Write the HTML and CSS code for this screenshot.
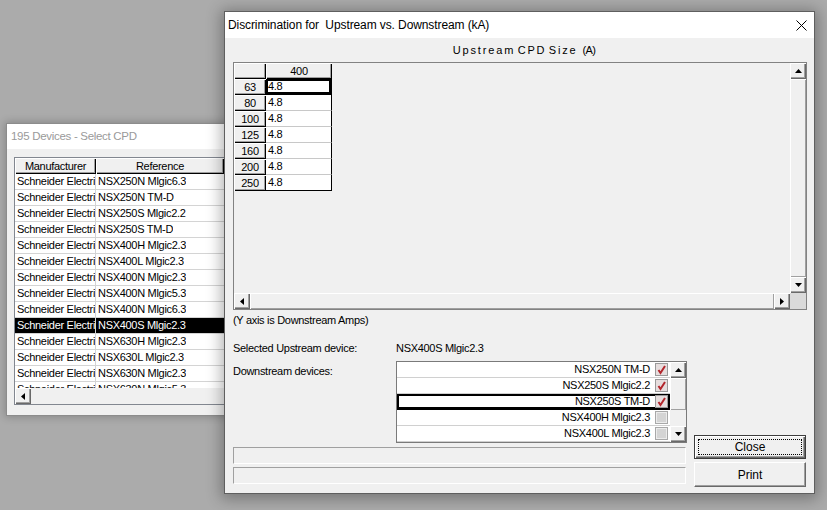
FILE: index.html
```html
<!DOCTYPE html>
<html>
<head>
<meta charset="utf-8">
<link rel="stylesheet" href="styles.css">
</head>
<body>
<div class="desktop">

  <div class="win devices">
    <div class="titlebar inactive">195 Devices - Select CPD</div>
    <div class="dev-body">
      <div class="listview">
        <div class="lv-head">
          <div class="lh col-m">Manufacturer</div>
          <div class="lh col-r">Reference</div>
        </div>
        <div class="lv-rows">
          <div class="lv-row"><div class="c-m">Schneider Electric</div><div class="c-r">NSX250N Mlgic6.3</div></div>
          <div class="lv-row"><div class="c-m">Schneider Electric</div><div class="c-r">NSX250N TM-D</div></div>
          <div class="lv-row"><div class="c-m">Schneider Electric</div><div class="c-r">NSX250S Mlgic2.2</div></div>
          <div class="lv-row"><div class="c-m">Schneider Electric</div><div class="c-r">NSX250S TM-D</div></div>
          <div class="lv-row"><div class="c-m">Schneider Electric</div><div class="c-r">NSX400H Mlgic2.3</div></div>
          <div class="lv-row"><div class="c-m">Schneider Electric</div><div class="c-r">NSX400L Mlgic2.3</div></div>
          <div class="lv-row"><div class="c-m">Schneider Electric</div><div class="c-r">NSX400N Mlgic2.3</div></div>
          <div class="lv-row"><div class="c-m">Schneider Electric</div><div class="c-r">NSX400N Mlgic5.3</div></div>
          <div class="lv-row"><div class="c-m">Schneider Electric</div><div class="c-r">NSX400N Mlgic6.3</div></div>
          <div class="lv-row selected"><div class="c-m">Schneider Electric</div><div class="c-r">NSX400S Mlgic2.3</div></div>
          <div class="lv-row"><div class="c-m">Schneider Electric</div><div class="c-r">NSX630H Mlgic2.3</div></div>
          <div class="lv-row"><div class="c-m">Schneider Electric</div><div class="c-r">NSX630L Mlgic2.3</div></div>
          <div class="lv-row"><div class="c-m">Schneider Electric</div><div class="c-r">NSX630N Mlgic2.3</div></div>
          <div class="lv-row"><div class="c-m">Schneider Electric</div><div class="c-r">NSX630N Mlgic5.3</div></div>
        </div>
        <div class="hscroll">
          <div class="sb-btn w16"><svg width="4" height="7" viewBox="0 0 4 7"><path d="M4 0V7L0 3.5Z"/></svg></div>
          <div class="sb-track"></div>
        </div>
      </div>
    </div>
  </div>

  <div class="win dialog">
    <div class="titlebar">
      <span>Discrimination for&nbsp; Upstream vs. Downstream (kA)</span>
      <svg class="xbtn" width="11" height="11" viewBox="0 0 11 11"><path d="M0.5 0.5L10.5 10.5M10.5 0.5L0.5 10.5" stroke="#000" stroke-width="1" fill="none"/></svg>
    </div>
    <div class="dbody">
      <div class="heading">U p s t r e a m&nbsp; C P D&nbsp; S i z e&nbsp;&nbsp; (A)</div>

      <div class="gridbox">
        <div class="gb-content">
          <div class="tbl">
            <div class="hc"></div><div class="hc">400</div>
            <div class="hc">63</div><div class="dc focus">4.8</div>
            <div class="hc">80</div><div class="dc">4.8</div>
            <div class="hc">100</div><div class="dc">4.8</div>
            <div class="hc">125</div><div class="dc">4.8</div>
            <div class="hc">160</div><div class="dc">4.8</div>
            <div class="hc">200</div><div class="dc">4.8</div>
            <div class="hc">250</div><div class="dc last">4.8</div>
          </div>
        </div>
        <div class="vscroll">
          <div class="sb-btn h16"><svg width="7" height="4" viewBox="0 0 7 4"><path d="M0 4H7L3.5 0Z"/></svg></div>
          <div class="sb-thumb grow"></div>
          <div class="sb-btn h16"><svg width="7" height="4" viewBox="0 0 7 4"><path d="M0 0H7L3.5 4Z"/></svg></div>
        </div>
        <div class="hscroll2">
          <div class="sb-btn w16"><svg width="4" height="7" viewBox="0 0 4 7"><path d="M4 0V7L0 3.5Z"/></svg></div>
          <div class="sb-thumb grow"></div>
          <div class="sb-btn w16"><svg width="4" height="7" viewBox="0 0 4 7"><path d="M0 0V7L4 3.5Z"/></svg></div>
        </div>
        <div class="sb-corner"></div>
      </div>

      <div class="caption">(Y axis is Downstream Amps)</div>

      <div class="lower">
        <div class="lower-left">
          <div class="sel-row">
            <div class="lbl">Selected Upstream device:</div>
            <div>NSX400S Mlgic2.3</div>
          </div>
          <div class="down-row">
            <div class="lbl lbl-down">Downstream devices:</div>
            <div class="listbox">
              <div class="lb-items">
                <div class="lb-row"><span>NSX250N TM-D</span><svg class="cb" width="13" height="13" viewBox="0 0 13 13"><rect x="0.5" y="0.5" width="12" height="12" fill="#e6dede" stroke="#9a9a9a"/><path d="M3.5 7L5.5 10L10 3" stroke="#b3262c" stroke-width="2" fill="none"/></svg></div>
                <div class="lb-row"><span>NSX250S Mlgic2.2</span><svg class="cb" width="13" height="13" viewBox="0 0 13 13"><rect x="0.5" y="0.5" width="12" height="12" fill="#e6dede" stroke="#9a9a9a"/><path d="M3.5 7L5.5 10L10 3" stroke="#b3262c" stroke-width="2" fill="none"/></svg></div>
                <div class="lb-row focus"><span>NSX250S TM-D</span><svg class="cb" width="13" height="13" viewBox="0 0 13 13"><rect x="0.5" y="0.5" width="12" height="12" fill="#e6dede" stroke="#9a9a9a"/><path d="M3.5 7L5.5 10L10 3" stroke="#b3262c" stroke-width="2" fill="none"/></svg></div>
                <div class="lb-row"><span>NSX400H Mlgic2.3</span><svg class="cb" width="13" height="13" viewBox="0 0 13 13"><rect x="0.5" y="0.5" width="12" height="12" fill="#d4d4d4" stroke="#a8a8a8"/><rect x="1.5" y="1.5" width="10" height="10" fill="none" stroke="#ececec"/></svg></div>
                <div class="lb-row"><span>NSX400L Mlgic2.3</span><svg class="cb" width="13" height="13" viewBox="0 0 13 13"><rect x="0.5" y="0.5" width="12" height="12" fill="#d4d4d4" stroke="#a8a8a8"/><rect x="1.5" y="1.5" width="10" height="10" fill="none" stroke="#ececec"/></svg></div>
              </div>
              <div class="lb-scroll">
                <div class="sb-btn h16"><svg width="7" height="4" viewBox="0 0 7 4"><path d="M0 4H7L3.5 0Z"/></svg></div>
                <div class="sb-thumb lb-thumb"></div>
                <div class="sb-track grow"></div>
                <div class="sb-btn h16"><svg width="7" height="4" viewBox="0 0 7 4"><path d="M0 0H7L3.5 4Z"/></svg></div>
              </div>
            </div>
          </div>
          <div class="progress first"></div>
          <div class="progress"></div>
        </div>
        <div class="lower-right">
          <div class="btn default"><span class="focus-rect">Close</span></div>
          <div class="btn print">Print</div>
        </div>
      </div>
    </div>
  </div>

</div>
</body>
</html>
```

FILE: styles.css
```css
* { box-sizing: border-box; }
html, body { margin: 0; padding: 0; }
body {
  width: 827px;
  height: 510px;
  overflow: hidden;
  background: #ababab;
  font-family: "Liberation Sans", Arial, sans-serif;
  font-size: 11px;
  letter-spacing: -0.3px;
  color: #000;
}
.desktop { position: relative; width: 827px; height: 510px; }

.win {
  position: absolute;
  background: #f0f0f0;
  display: flex;
  flex-direction: column;
}
.titlebar {
  flex: none;
  background: #fff;
  font-size: 12px;
  letter-spacing: -0.1px;
  white-space: nowrap;
  padding-left: 3px;
}
.inactive { color: #9a9a9a; }

/* left window */
.devices {
  left: 6px;
  top: 123px;
  width: 240px;
  height: 293px;
  border: 1px solid #8c8c8c;
  box-shadow: 0 0 8px 1px rgba(0,0,0,0.22);
}
.devices .titlebar { height: 25px; line-height: 25px; font-size: 11.5px; letter-spacing: -0.3px; padding-left: 4px; }
.dev-body { padding: 8px 0 0 7px; }
.listview {
  width: 226px;
  height: 248px;
  border: 1px solid #828790;
  background: #fff;
  display: flex;
  flex-direction: column;
  overflow: hidden;
}
.lv-head { display: flex; height: 16px; flex: none; }
.lh {
  background: #f0f0f0;
  text-align: center;
  line-height: 16px;
  box-shadow: inset 1px 1px #fff, inset -1px -1px #000, inset -2px -2px #a0a0a0;
  white-space: nowrap;
  overflow: hidden;
}
.col-m { width: 81px; flex: none; }
.col-r { width: 128px; flex: none; }
.lv-rows { height: 214px; overflow: hidden; flex: none; }
.lv-row {
  display: flex;
  height: 16px;
  border-bottom: 1px solid #d4d4d4;
  line-height: 15px;
  white-space: nowrap;
}
.c-m { width: 81px; flex: none; overflow: hidden; text-overflow: clip; padding-left: 2px; border-right: 1px solid #d4d4d4; }
.c-r { padding-left: 2px; overflow: hidden; }
.lv-row.selected { background: #000; color: #fff; }
.hscroll { display: flex; height: 16px; flex: none; background: #f0f0f0; }

/* scrollbar parts */
.sb-btn {
  background: #f0f0f0;
  box-shadow: inset 1px 1px #fff, inset -1px -1px #696969, inset -2px -2px #a0a0a0;
  display: flex;
  align-items: center;
  justify-content: center;
  flex: none;
}
.sb-btn svg { display: block; fill: #000; }
.w16 { width: 16px; }
.h16 { height: 16px; }
.sb-track { flex: 1; background: #f0f0f0; }
.sb-thumb {
  background: #f0f0f0;
  box-shadow: inset 1px 1px #fff, inset -1px -1px #a0a0a0;
}
.grow { flex: 1; }

/* dialog */
.dialog {
  left: 224px;
  top: 11px;
  width: 591px;
  height: 483px;
  border: 1px solid #5f5f5f;
  box-shadow: 0 2px 14px 3px rgba(0,0,0,0.3);
}
.dialog .titlebar {
  height: 26px;
  line-height: 25px;
  display: flex;
  align-items: center;
  justify-content: space-between;
  padding-right: 7px;
}
.xbtn { display: block; }
.dbody {
  flex: 1;
  padding: 0 7px 6px 8px;
  display: flex;
  flex-direction: column;
}
.heading {
  padding-top: 4px;
  margin-bottom: 4px;
  line-height: 16px;
  text-align: center;
  white-space: pre;
  letter-spacing: -0.6px;
  padding-left: 8px;
}
.gridbox {
  height: 248px;
  border: 1px solid #828282;
  display: grid;
  grid-template-columns: 1fr 16px;
  grid-template-rows: 1fr 16px;
  flex: none;
}
.gb-content { background: #f0f0f0; overflow: hidden; }
.tbl {
  display: grid;
  grid-template-columns: 32px 66px;
  grid-auto-rows: 16px;
  width: 98px;
}
.hc {
  background: #f0f0f0;
  text-align: center;
  line-height: 16px;
  box-shadow: inset 1px 1px #fff, inset -1px -1px #000, inset -2px -2px #a0a0a0;
}
.dc {
  background: #fff;
  border-bottom: 1px solid #c8c8c8;
  border-right: 1px solid #000;
  padding-left: 2px;
  line-height: 15px;
}
.dc.last { border-bottom-color: #000; }
.dc.focus { box-shadow: inset 0 0 0 2px #000; border-bottom-color: #000; }
.vscroll { display: flex; flex-direction: column; }
.hscroll2 { display: flex; }
.sb-corner { background: #dadada; }

.caption { margin-top: 3px; line-height: 14px; height: 14px; }

.lower {
  margin-top: 14px;
  display: flex;
  align-items: flex-end;
  gap: 7px;
}
.lower-left { width: 454px; margin-bottom: 3px; }
.sel-row { display: flex; line-height: 14px; height: 14px; }
.lbl { width: 163px; flex: none; }
.down-row { display: flex; margin-top: 6px; }
.lbl-down { padding-top: 3px; line-height: 14px; }
.listbox {
  width: 291px;
  height: 82px;
  border: 1px solid #7a7a7a;
  display: flex;
  background: #fff;
}
.lb-items { flex: 1; }
.lb-row {
  display: flex;
  justify-content: flex-end;
  align-items: center;
  height: 16px;
  border-bottom: 1px solid #d0d0d0;
  padding-right: 2px;
  white-space: nowrap;
}
.lb-row span { margin-right: 5px; line-height: 15px; }
.cb { display: block; flex: none; }
.lb-row.focus { box-shadow: inset 0 0 0 2px #000; border-bottom-color: #000; }
.lb-scroll { width: 16px; display: flex; flex-direction: column; background: #f0f0f0; }
.lb-thumb { height: 32px; flex: none; }

.progress {
  height: 17px;
  width: 453px;
  border: 1px solid;
  border-color: #a0a0a0 #fff #fff #a0a0a0;
  background: #f0f0f0;
}
.progress.first { margin-top: 4px; }
.progress + .progress { margin-top: 3px; }

.lower-right { width: 112px; display: flex; flex-direction: column; }
.btn {
  background: #f0f0f0;
  font-size: 12px;
  letter-spacing: 0;
  display: flex;
  align-items: center;
  justify-content: center;
}
.btn.default {
  height: 24px;
  border: 1px solid #3c3c3c;
  box-shadow: inset 1px 1px #fff, inset -1px -1px #696969, inset -2px -2px #a0a0a0;
  padding: 3px;
}
.focus-rect {
  flex: 1;
  align-self: stretch;
  border: 1px dotted #000;
  display: flex;
  align-items: center;
  justify-content: center;
}
.btn.print {
  margin-top: 3px;
  height: 25px;
  border: 1px solid;
  border-color: #fff #696969 #696969 #fff;
  box-shadow: inset -1px -1px #a0a0a0;
}
```
